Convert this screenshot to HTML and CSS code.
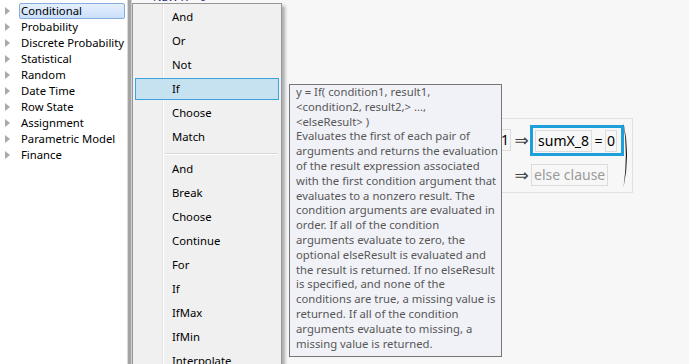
FILE: index.html
```html
<!DOCTYPE html>
<html lang="en">
<head>
<meta charset="UTF-8">
<title>Formula Editor - Conditional</title>
<link rel="stylesheet" href="styles.css">
</head>
<body>

<div class="app">
    <ul class="tree">
        <li class="node selected"><span class="arrow"></span><span class="label">Conditional</span></li>
        <li class="node"><span class="arrow"></span><span class="label">Probability</span></li>
        <li class="node"><span class="arrow"></span><span class="label">Discrete Probability</span></li>
        <li class="node"><span class="arrow"></span><span class="label">Statistical</span></li>
        <li class="node"><span class="arrow"></span><span class="label">Random</span></li>
        <li class="node"><span class="arrow"></span><span class="label">Date Time</span></li>
        <li class="node"><span class="arrow"></span><span class="label">Row State</span></li>
        <li class="node"><span class="arrow"></span><span class="label">Assignment</span></li>
        <li class="node"><span class="arrow"></span><span class="label">Parametric Model</span></li>
        <li class="node"><span class="arrow"></span><span class="label">Finance</span></li>
    </ul>

    <div class="splitter"></div>

    <div class="workspace">
        <div class="script-line">
            <span class="script-icon"></span>
            <span class="script-text">NEW X = 9</span>
        </div>

        <div class="formula-row">
            <div class="formula">
                <div class="clauses">
                    <div class="cond"><span class="cell">X</span><span class="op">==</span><span class="cell">1</span></div>
                    <span class="implies">&rArr;</span>
                    <div class="result active"><span class="cell name">sumX_8</span><span class="op">=</span><span class="cell">0</span></div>

                    <div class="cond"></div>
                    <span class="implies">&rArr;</span>
                    <div class="result"><span class="cell name placeholder">else clause</span></div>
                </div>
                <svg class="paren" width="7" height="66" viewBox="0 0 7 66">
                    <path d="M0.5 0.5 Q7.6 33 0.5 65.5 Q5.2 33 0.5 0.5 Z" fill="#111"/>
                </svg>
            </div>
        </div>
    </div>

    <!-- popup menu of the Conditional group -->
    <ul class="menu">
        <li class="item">And</li>
        <li class="item">Or</li>
        <li class="item">Not</li>
        <li class="item hot">If</li>
        <li class="item">Choose</li>
        <li class="item">Match</li>
        <li class="separator"></li>
        <li class="item">And</li>
        <li class="item">Break</li>
        <li class="item">Choose</li>
        <li class="item">Continue</li>
        <li class="item">For</li>
        <li class="item">If</li>
        <li class="item">IfMax</li>
        <li class="item">IfMin</li>
        <li class="item">Interpolate</li>
    </ul>

    <div class="tooltip">
        y = If( condition1, result1,<br>
        &lt;condition2, result2,&gt; ...,<br>
        &lt;elseResult&gt; )<br>
        Evaluates the first of each pair of<br>
        arguments and returns the evaluation<br>
        of the result expression associated<br>
        with the first condition argument that<br>
        evaluates to a nonzero result. The<br>
        condition arguments are evaluated in<br>
        order. If all of the condition<br>
        arguments evaluate to zero, the<br>
        optional elseResult is evaluated and<br>
        the result is returned. If no elseResult<br>
        is specified, and none of the<br>
        conditions are true, a missing value is<br>
        returned. If all of the condition<br>
        arguments evaluate to missing, a<br>
        missing value is returned.
    </div>
</div>

</body>
</html>
```

FILE: styles.css
```css
body {
  margin: 0;
  font-family: "Noto Sans", "Open Sans", sans-serif;
  font-size: 11.3px;
  color: #000;
}

.app {
  position: relative;
  display: flex;
  width: 689px;
  height: 364px;
  overflow: hidden;
  background-color: #f7f7f7;
}

/* left tree of function groups */
.tree {
  flex: none;
  width: 127px;
  margin: 0;
  padding: 3px 0 0;
  list-style: none;
  background-color: #fff;
}

.node {
  display: flex;
  align-items: center;
  height: 16px;
  padding-left: 5px;
}

.arrow {
  width: 0;
  height: 0;
  margin-right: 9px;
  border-left: 5px solid #a9a9a9;
  border-top: 4px solid transparent;
  border-bottom: 4px solid transparent;
}

.label {
  padding: 0 3px 0 1px;
  border: 1px solid transparent;
  line-height: 14px;
  white-space: nowrap;
}

.selected .label {
  flex: 1;
  margin-right: 2px;
  background: linear-gradient(#e6f0fc, #cadffb);
  border-color: #84acdd;
  border-radius: 2px;
}

.splitter {
  flex: none;
  width: 5px;
  background: linear-gradient(to right, #dadada 0 1px, #a4a4a4 1px 4px, #cfcfcf 4px);
}

/* formula workspace */
.workspace {
  flex: 1;
  min-width: 0;
}

.script-line {
  display: flex;
  align-items: center;
  height: 14px;
  margin-top: -11px;
  padding-left: 6px;
}

.script-icon {
  width: 6px;
  height: 8px;
  margin-right: 9px;
  background-color: #2d6fc4;
}

.script-text {
  color: #2a2a7a;
}

.formula-row {
  display: flex;
  justify-content: flex-end;
  margin-top: 115px;
  padding-right: 56px;
}

.formula {
  display: flex;
  align-items: center;
  padding: 3px 2px 4px 6px;
  border: 1px solid #e1e1e1;
  font-size: 14px;
}

.clauses {
  display: grid;
  grid-template-columns: auto auto auto;
  row-gap: 8px;
  align-items: center;
}

.cond,
.result {
  display: flex;
  align-items: center;
}

.cell {
  height: 22px;
  padding: 0 1px;
  border: 1px solid #dcdcdc;
  box-sizing: border-box;
  line-height: 20px;
  white-space: nowrap;
}

.cell.name {
  padding: 0 2px;
}

.op {
  margin: 0 2.5px;
}

.implies {
  width: 19px;
  padding-left: 2px;
  box-sizing: border-box;
  color: #444;
  font-family: "DejaVu Sans", sans-serif;
  font-size: 17px;
  line-height: 20px;
  text-align: center;
}

.result.active {
  padding: 2px 4px 1px 2px;
  border: 3px solid #1c9fda;
}

.placeholder {
  margin-left: 1px;
  color: #9a9a9a;
}

.paren {
  display: block;
  margin-left: -1px;
}

/* popup menu */
.menu {
  position: absolute;
  left: 132px;
  top: 3px;
  display: flex;
  flex-direction: column;
  width: 150px;
  height: 380px;
  margin: 0;
  padding: 2px 0 0;
  list-style: none;
  box-sizing: border-box;
  border: 1px solid #979797;
  background: linear-gradient(to right, #f0f0f0 29px, #e2e3e3 29px 30px, #fff 30px 31px, #f0f0f0 31px);
  box-shadow: 3px 3px 3px rgba(0, 0, 0, 0.3);
}

.item {
  flex: none;
  height: 22px;
  margin: 0 2px 2px;
  padding-left: 36px;
  border: 1px solid transparent;
  box-sizing: border-box;
  line-height: 20px;
}

.item.hot {
  background-color: #c6e1ef;
  border-color: #3ea3da;
}

.separator {
  flex: none;
  margin: 3px 3px 3px 32px;
  border-top: 1px solid #d7d7d7;
  border-bottom: 1px solid #fff;
}

/* hover help for the If item */
.tooltip {
  position: absolute;
  left: 289px;
  top: 84px;
  width: 213px;
  height: 273px;
  padding: 0 6px;
  box-sizing: border-box;
  border: 1px solid #767676;
  background-color: #f1f2f7;
  color: #575757;
  line-height: 14.8px;
  white-space: nowrap;
}
```
